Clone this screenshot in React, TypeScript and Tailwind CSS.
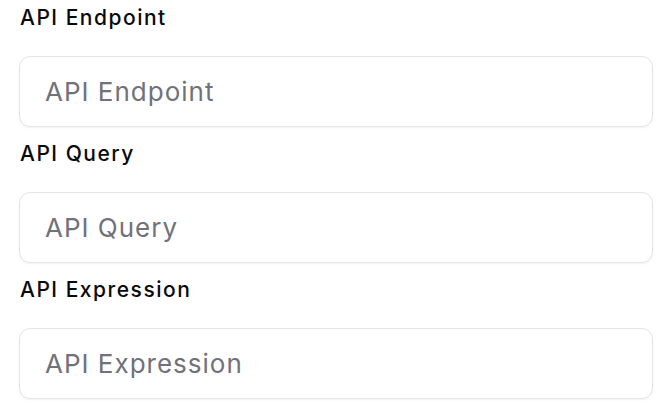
const fields = ['API Endpoint', 'API Query', 'API Expression'];

export default function App() {
  return (
    <div
      className="flex h-[416px] w-[672px] flex-col gap-[9px] bg-white pl-[19px]"
      style={{ fontFamily: 'Inter, "Noto Sans", sans-serif' }}
    >
      {fields.map((name) => (
        <div key={name} className="flex flex-col gap-[21px]">
          <label className="h-[35px] pl-px text-[21px] font-medium leading-[35px] tracking-[1.5px] text-[#09090b]">
            {name}
          </label>
          <input
            type="text"
            placeholder={name}
            className="h-[71px] w-[634px] rounded-[11px] border border-[#e4e4e7] bg-white px-[25px] text-[26px] tracking-[1px] text-[#09090b] shadow-[0_1px_2px_rgba(0,0,0,0.05)] outline-none placeholder:text-[#71717a]"
          />
        </div>
      ))}
    </div>
  );
}
